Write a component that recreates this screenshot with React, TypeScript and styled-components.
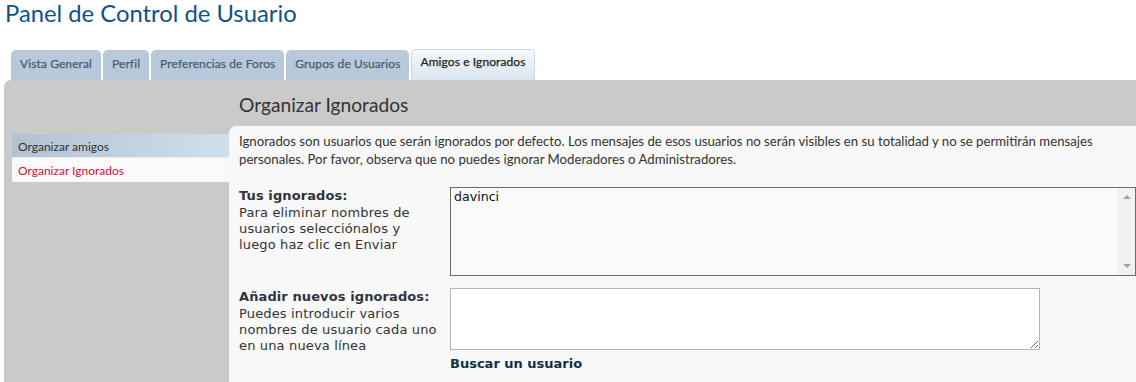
import React from 'react';
import styled, { createGlobalStyle } from 'styled-components';

const GlobalStyle = createGlobalStyle`
  html, body {
    margin: 0;
    padding: 0;
    background: #ffffff;
    overflow: hidden;
  }
  body {
    font-family: Lato, "Liberation Sans", sans-serif;
    color: #333333;
  }
`;

const Page = styled.div`
  width: 1136px;
  height: 382px;
  overflow: hidden;
  padding: 0 0 0 4px;
  box-sizing: border-box;
`;

const Title = styled.h2`
  margin: 0;
  padding: 0 0 0 1px;
  height: 49px;
  box-sizing: border-box;
  font-family: Lato, sans-serif;
  font-weight: 400;
  font-size: 23.8px;
  line-height: 27px;
  color: #105289;
`;

const TabBar = styled.ul`
  display: flex;
  align-items: flex-end;
  gap: 2px;
  margin: 0;
  padding: 0 0 0 7px;
  list-style: none;
  height: 31px;
`;

const Tab = styled.li<{ active?: boolean }>`
  height: ${({ active }) => (active ? '31px' : '30px')};
  box-sizing: border-box;
  padding: ${({ active }) => (active ? '4px 8px 0' : '5px 8px 0')};
  border-radius: 5px 5px 0 0;
  border: 1px solid ${({ active }) => (active ? '#c7d8e6' : '#b8cad9')};
  border-bottom: none;
  background: ${({ active }) =>
    active ? 'linear-gradient(to bottom, #f4f8fb 0%, #dae6f0 100%)' : '#b8cad9'};
  font-family: Lato, sans-serif;
  font-size: 12px;
  letter-spacing: 0.1px;
  line-height: 16px;
  color: ${({ active }) => (active ? '#222222' : '#4a5b74')};
  -webkit-text-stroke: 0.25px currentColor;
  white-space: nowrap;
`;

const Panel = styled.div`
  background: #cacaca;
  border-radius: 7px 0 0 0;
  padding: 0 0 0 8px;
  height: 302px;
  display: grid;
  grid-template-columns: 217px 1fr;
  grid-template-rows: 46px 1fr;
`;

const SectionTitle = styled.h3`
  grid-column: 2;
  margin: 0;
  padding: 13px 0 0 10px;
  font-family: Lato, sans-serif;
  font-weight: 400;
  font-size: 19.2px;
  line-height: 23px;
  color: #333333;
`;

const SideNav = styled.ul`
  grid-column: 1;
  grid-row: 2;
  margin: 0;
  padding: 8px 0 0;
  list-style: none;
`;

const NavItem = styled.li<{ current?: boolean }>`
  height: 24px;
  box-sizing: border-box;
  padding: 5px 0 0 6px;
  font-family: Lato, sans-serif;
  font-size: 12px;
  line-height: 16px;
  background: ${({ current }) =>
    current ? '#f9f9f9' : 'linear-gradient(to right, #b2c2d1 0%, #cfdfec 100%)'};
  color: ${({ current }) => (current ? '#d31141' : '#333333')};
  border-bottom: ${({ current }) => (current ? 'none' : '1px solid #e8eef3')};
`;

const Content = styled.div`
  grid-column: 2;
  grid-row: 2;
  background: #f8f8f8;
  border-radius: 7px 0 0 0;
  padding: 6px 0 0 10px;
`;

const Intro = styled.p`
  margin: 0 0 19px;
  font-family: Lato, sans-serif;
  font-size: 13.2px;
  line-height: 18px;
  color: #333333;
  padding-right: 30px;
`;

const FieldRow = styled.div`
  display: grid;
  grid-template-columns: 211px 1fr;
  margin-bottom: 12px;
`;

const Label = styled.div`
  font-family: "DejaVu Sans", Verdana, sans-serif;
  font-size: 13px;
  letter-spacing: 0.15px;
  line-height: 16px;
  color: #333333;
  padding-right: 11px;
`;

const LabelStrong = styled.div`
  font-weight: 700;
  font-size: 13px;
  letter-spacing: 0.1px;
  line-height: 18px;
  white-space: nowrap;
  color: #2e3540;
`;

const ListBox = styled.div`
  height: 89px;
  box-sizing: border-box;
  border: 1px solid #6b6b6b;
  background: #fafafa;
  display: flex;
`;

const ListItems = styled.div`
  flex: 1;
  padding: 1px 3px;
  font-family: "DejaVu Sans", Verdana, sans-serif;
  font-size: 12.6px;
  line-height: 16px;
  color: #111111;
`;

const ScrollTrack = styled.div`
  width: 17px;
  background: #f1f1f1;
  display: flex;
  flex-direction: column;
  justify-content: space-between;
  align-items: center;
  padding: 7px 0 7px;
  box-sizing: border-box;
`;

const Arrow = styled.span<{ down?: boolean }>`
  width: 0;
  height: 0;
  border-left: 4px solid transparent;
  border-right: 4px solid transparent;
  ${({ down }) => (down ? 'border-top: 4px solid #a3a3a3;' : 'border-bottom: 4px solid #a3a3a3;')}
`;

const NewArea = styled.textarea`
  display: block;
  width: 590px;
  height: 62px;
  box-sizing: border-box;
  margin: 0;
  border: 1px solid #b4b4b4;
  background: #ffffff;
  font-family: "DejaVu Sans", Verdana, sans-serif;
  font-size: 12px;
  outline: none;
`;

const FindLink = styled.a`
  display: block;
  margin-top: 5px;
  font-family: "DejaVu Sans", Verdana, sans-serif;
  font-size: 13px;
  font-weight: 700;
  line-height: 18px;
  color: #12313f;
  text-decoration: none;
`;

export default function App() {
  return (
    <Page>
      <GlobalStyle />
      <Title>Panel de Control de Usuario</Title>
      <TabBar>
        <Tab>Vista General</Tab>
        <Tab>Perfil</Tab>
        <Tab>Preferencias de Foros</Tab>
        <Tab>Grupos de Usuarios</Tab>
        <Tab active>Amigos e Ignorados</Tab>
      </TabBar>
      <Panel>
        <SectionTitle>Organizar Ignorados</SectionTitle>
        <SideNav>
          <NavItem>Organizar amigos</NavItem>
          <NavItem current>Organizar Ignorados</NavItem>
        </SideNav>
        <Content>
          <Intro>
            Ignorados son usuarios que serán ignorados por defecto. Los mensajes de esos usuarios no serán visibles en su
            totalidad y no se permitirán mensajes personales. Por favor, observa que no puedes ignorar Moderadores o
            Administradores.
          </Intro>
          <FieldRow>
            <Label>
              <LabelStrong>Tus ignorados:</LabelStrong>
              Para eliminar nombres de usuarios selecciónalos y luego haz clic en Enviar
            </Label>
            <ListBox>
              <ListItems>davinci</ListItems>
              <ScrollTrack>
                <Arrow />
                <Arrow down />
              </ScrollTrack>
            </ListBox>
          </FieldRow>
          <FieldRow>
            <Label>
              <LabelStrong>Añadir nuevos ignorados:</LabelStrong>
              Puedes introducir varios nombres de usuario cada uno en una nueva línea
            </Label>
            <div>
              <NewArea />
              <FindLink href="#">Buscar un usuario</FindLink>
            </div>
          </FieldRow>
        </Content>
      </Panel>
    </Page>
  );
}
